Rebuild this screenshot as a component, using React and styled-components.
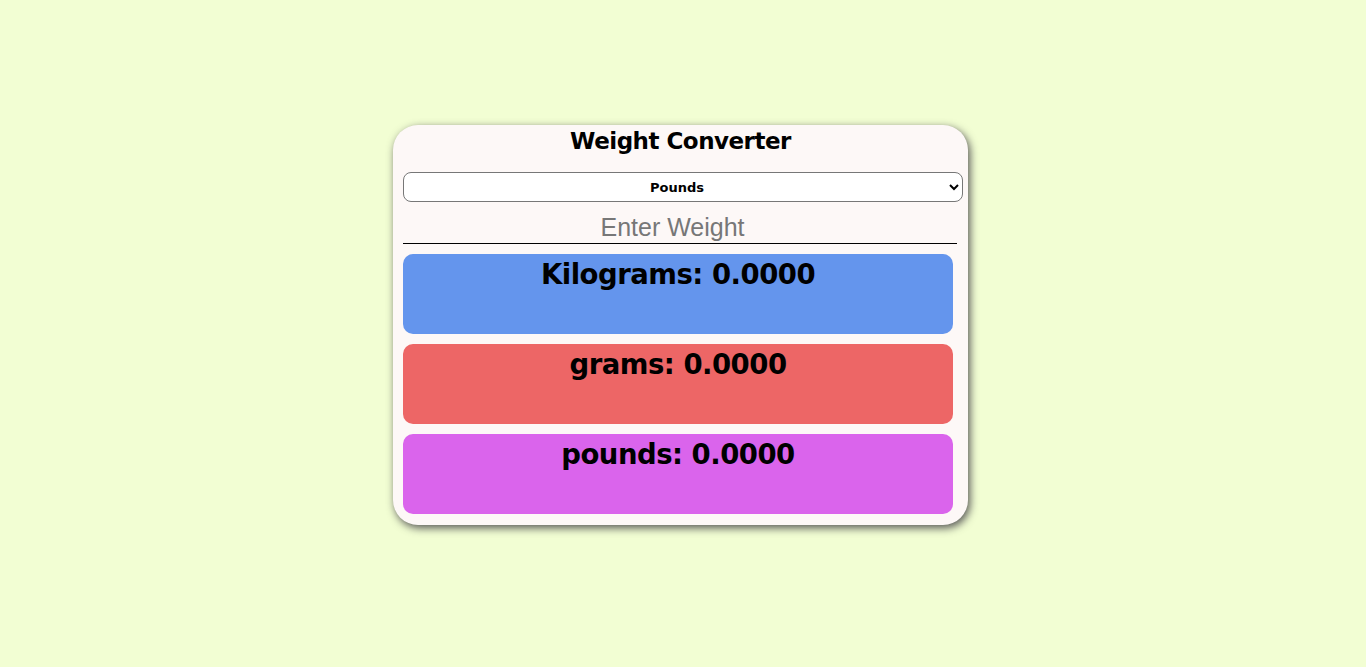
import React, { useState } from 'react'
import styled, { createGlobalStyle } from 'styled-components'

const GlobalStyle = createGlobalStyle`
  body {
    margin: 0;
    background-color: #f2fed3;
    font-family: "DejaVu Sans", Verdana, sans-serif;
  }
`

const Page = styled.div`
  height: 667px;
  display: flex;
  justify-content: center;
  padding: 125px 5px 0 0;
  box-sizing: border-box;
`

const Card = styled.div`
  width: 575px;
  height: 400px;
  box-sizing: border-box;
  background-color: #fdf8f7;
  border-radius: 25px;
  box-shadow: 2px 3px 8px #555;
  padding: 0 10px;
  display: flex;
  flex-direction: column;
`

const Title = styled.h1`
  margin: 0;
  height: 47px;
  padding-top: 3px;
  box-sizing: border-box;
  text-align: center;
  font-size: 23px;
  font-weight: bold;
  letter-spacing: -0.5px;
  color: #000;
`

const Select = styled.select`
  width: 560px;
  height: 30px;
  border: 1px solid #777;
  border-radius: 8px;
  background: #fff;
  font-family: "DejaVu Sans", Verdana, sans-serif;
  font-size: 13px;
  font-weight: bold;
  text-align: center;
  text-align-last: center;
  color: #000;
`

const Input = styled.input`
  width: 554px;
  height: 42px;
  margin-bottom: 10px;
  box-sizing: border-box;
  border: none;
  border-bottom: 1px solid #000;
  background: transparent;
  outline: none;
  text-align: center;
  font-family: "Liberation Sans", Arial, sans-serif;
  font-size: 25px;
  padding: 10px 0 0;
  &::placeholder {
    color: #777;
  }
`

const Result = styled.div`
  width: 550px;
  height: 80px;
  margin-bottom: 10px;
  border-radius: 10px;
  background-color: ${p => p.$bg};
  text-align: center;
  font-size: 27.5px;
  font-weight: bold;
  letter-spacing: -0.5px;
  line-height: 40px;
  color: #000;
`

export default function App() {
  const [unit, setUnit] = useState('pounds')
  const [weight, setWeight] = useState('')
  const w = parseFloat(weight) || 0
  const kg = unit === 'pounds' ? w / 2.2046 : unit === 'grams' ? w / 1000 : w
  return (
    <>
      <GlobalStyle />
      <Page>
        <Card>
          <Title>Weight Converter</Title>
          <Select value={unit} onChange={e => setUnit(e.target.value)}>
            <option value="pounds">Pounds</option>
            <option value="kilograms">Kilograms</option>
            <option value="grams">Grams</option>
          </Select>
          <Input
            type="number"
            placeholder="Enter Weight"
            value={weight}
            onChange={e => setWeight(e.target.value)}
          />
          <Result $bg="#6495ed">Kilograms: {kg.toFixed(4)}</Result>
          <Result $bg="#ed6666">grams: {(kg * 1000).toFixed(4)}</Result>
          <Result $bg="#da64ec">pounds: {(kg * 2.2046).toFixed(4)}</Result>
        </Card>
      </Page>
    </>
  )
}
